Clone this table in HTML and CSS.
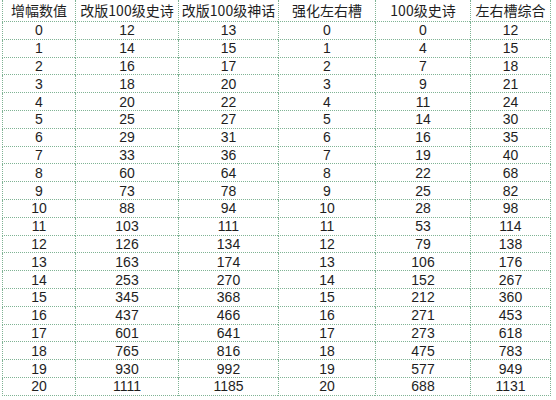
FILE: index.html
```html
<!DOCTYPE html>
<html lang="zh-CN">
<head>
<meta charset="utf-8">
<title>增幅数值</title>
<link rel="stylesheet" href="styles.css">
</head>
<body>
<div class="sheet">
<div class="c h">增幅数值</div><div class="c h">改版100级史诗</div><div class="c h">改版100级神话</div><div class="c h">强化左右槽</div><div class="c h">100级史诗</div><div class="c h last">左右槽综合</div>
<div class="c">0</div><div class="c">12</div><div class="c">13</div><div class="c">0</div><div class="c">0</div><div class="c last">12</div>
<div class="c">1</div><div class="c">14</div><div class="c">15</div><div class="c">1</div><div class="c">4</div><div class="c last">15</div>
<div class="c">2</div><div class="c">16</div><div class="c">17</div><div class="c">2</div><div class="c">7</div><div class="c last">18</div>
<div class="c">3</div><div class="c">18</div><div class="c">20</div><div class="c">3</div><div class="c">9</div><div class="c last">21</div>
<div class="c">4</div><div class="c">20</div><div class="c">22</div><div class="c">4</div><div class="c">11</div><div class="c last">24</div>
<div class="c">5</div><div class="c">25</div><div class="c">27</div><div class="c">5</div><div class="c">14</div><div class="c last">30</div>
<div class="c">6</div><div class="c">29</div><div class="c">31</div><div class="c">6</div><div class="c">16</div><div class="c last">35</div>
<div class="c">7</div><div class="c">33</div><div class="c">36</div><div class="c">7</div><div class="c">19</div><div class="c last">40</div>
<div class="c">8</div><div class="c">60</div><div class="c">64</div><div class="c">8</div><div class="c">22</div><div class="c last">68</div>
<div class="c">9</div><div class="c">73</div><div class="c">78</div><div class="c">9</div><div class="c">25</div><div class="c last">82</div>
<div class="c">10</div><div class="c">88</div><div class="c">94</div><div class="c">10</div><div class="c">28</div><div class="c last">98</div>
<div class="c">11</div><div class="c">103</div><div class="c">111</div><div class="c">11</div><div class="c">53</div><div class="c last">114</div>
<div class="c">12</div><div class="c">126</div><div class="c">134</div><div class="c">12</div><div class="c">79</div><div class="c last">138</div>
<div class="c">13</div><div class="c">163</div><div class="c">174</div><div class="c">13</div><div class="c">106</div><div class="c last">176</div>
<div class="c">14</div><div class="c">253</div><div class="c">270</div><div class="c">14</div><div class="c">152</div><div class="c last">267</div>
<div class="c">15</div><div class="c">345</div><div class="c">368</div><div class="c">15</div><div class="c">212</div><div class="c last">360</div>
<div class="c">16</div><div class="c">437</div><div class="c">466</div><div class="c">16</div><div class="c">271</div><div class="c last">453</div>
<div class="c">17</div><div class="c">601</div><div class="c">641</div><div class="c">17</div><div class="c">273</div><div class="c last">618</div>
<div class="c">18</div><div class="c">765</div><div class="c">816</div><div class="c">18</div><div class="c">475</div><div class="c last">783</div>
<div class="c">19</div><div class="c">930</div><div class="c">992</div><div class="c">19</div><div class="c">577</div><div class="c last">949</div>
<div class="c">20</div><div class="c">1111</div><div class="c">1185</div><div class="c">20</div><div class="c">688</div><div class="c last">1131</div>
</div>
</body>
</html>
```
FILE: styles.css
```css
html, body {
  margin: 0;
  padding: 0;
  background: #ffffff;
}
body {
  padding-left: 2px;
  font-family: "Liberation Sans", "Noto Sans CJK SC", sans-serif;
  color: #1e1e1e;
}
.sheet {
  display: grid;
  grid-template-columns: 73px 103px 100px 97px 95px 81px;
  grid-template-rows: 22px repeat(21, 17.8px);
  width: 549px;
}
.c {
  box-sizing: border-box;
  border-left: 1px dotted #7fb394;
  border-bottom: 1px dotted #7fb394;
  display: flex;
  align-items: center;
  justify-content: center;
  font-size: 14px;
  line-height: 16px;
  white-space: nowrap;
}
.h {
  font-family: "Noto Sans CJK SC", "Noto Sans", sans-serif;
  padding-bottom: 1px;
}
.last {
  border-right: 1px dotted #7fb394;
}
```
